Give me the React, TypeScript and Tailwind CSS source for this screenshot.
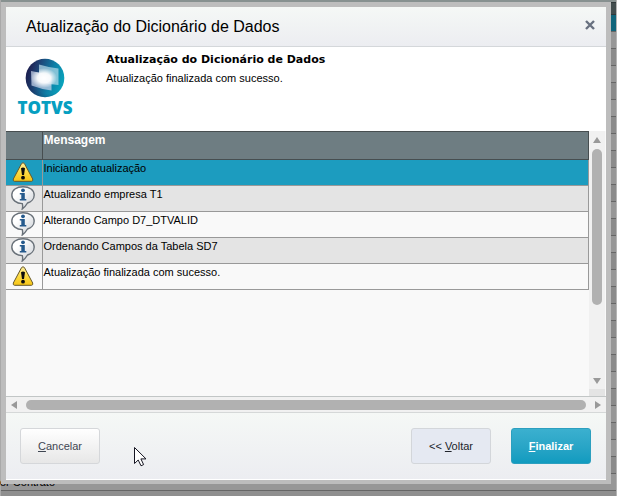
import { useState } from "react";

type MessageKind = "warning" | "info";

interface Message {
  kind: MessageKind;
  text: string;
}

const messages: Message[] = [
  { kind: "warning", text: "Iniciando atualização" },
  { kind: "info", text: "Atualizando empresa T1" },
  { kind: "info", text: "Alterando Campo D7_DTVALID" },
  { kind: "info", text: "Ordenando Campos da Tabela SD7" },
  { kind: "warning", text: "Atualização finalizada com sucesso." },
];

function TotvsLogo() {
  return (
    <div className="flex w-[54px] flex-col items-center">
      <svg width="40" height="40" viewBox="0 0 40 40" aria-hidden="true">
        <defs>
          <linearGradient id="globe" x1="0" y1="0.3" x2="1" y2="0.6">
            <stop offset="0" stopColor="#20184a" />
            <stop offset="0.3" stopColor="#1d4678" />
            <stop offset="0.65" stopColor="#0d7fa6" />
            <stop offset="1" stopColor="#0aa5bd" />
          </linearGradient>
          <radialGradient id="shade" cx="0.6" cy="0.45" r="0.65">
            <stop offset="0.7" stopColor="#12264f" stopOpacity="0" />
            <stop offset="1" stopColor="#12264f" stopOpacity="0.4" />
          </radialGradient>
          <radialGradient id="glow">
            <stop offset="0" stopColor="#fff" />
            <stop offset="0.5" stopColor="#fff" stopOpacity="0.9" />
            <stop offset="1" stopColor="#fff" stopOpacity="0" />
          </radialGradient>
          <clipPath id="panes">
            <path d="M14 6.500Q24 9.500 33.500 10.500V27Q23 26.500 14 23.500Z" />
            <path d="M6 13Q16 14.500 26.500 18V32.500Q17 31.500 6.500 27.500Z" />
          </clipPath>
        </defs>
        <circle cx="20" cy="20" r="19.3" fill="url(#globe)" />
        <circle cx="20" cy="20" r="19.3" fill="url(#shade)" />
        <path d="M14 6.500Q24 9.500 33.500 10.500V27Q23 26.500 14 23.500Z" fill="#b7dbea" fillOpacity="0.7" />
        <path d="M6 13Q16 14.500 26.500 18V32.500Q17 31.500 6.500 27.500Z" fill="#c3cfe6" fillOpacity="0.75" />
        <ellipse cx="19" cy="20" rx="13" ry="10" fill="url(#glow)" clipPath="url(#panes)" />
      </svg>
      <span className="font-['Open_Sans',sans-serif] text-[17px] leading-5 font-extrabold text-[#069fc1]">
        TOTVS
      </span>
    </div>
  );
}

function WarningIcon() {
  return (
    <svg width="22" height="20" viewBox="0 0 22 20" aria-label="Aviso">
      <defs>
        <linearGradient id="yellow" x1="0" y1="0" x2="0" y2="1">
          <stop offset="0" stopColor="#fff0a0" />
          <stop offset="0.5" stopColor="#fddb45" />
          <stop offset="1" stopColor="#f6c515" />
        </linearGradient>
      </defs>
      <path
        d="M9.600 1.500Q11 0 12.400 1.500L20.700 17Q21.200 19.200 19.500 19.300H2.500Q0.800 19.200 1.300 17Z"
        fill="url(#yellow)"
        stroke="#66582a"
      />
      <path d="M9 6.300Q11 4.500 13 6.300L12 13H10Z" fill="#0c0c0c" />
      <circle cx="11" cy="15.700" r="1.900" fill="#0c0c0c" />
    </svg>
  );
}

function InfoIcon() {
  return (
    <svg width="24" height="24" viewBox="0 0 24 24" aria-label="Informação">
      <defs>
        <linearGradient id="bubble" x1="0" y1="0" x2="1" y2="1">
          <stop offset="0.3" stopColor="#fff" />
          <stop offset="1" stopColor="#c9ced4" />
        </linearGradient>
      </defs>
      <path
        d="M12 0.700C18.500 0.700 23.200 4 23.200 9C23.200 13 20 16 16.500 17C15 19.500 13.300 21.500 11.300 23C11.800 21 11.800 19.500 11.300 17.600C5.500 17.400 0.800 14 0.800 9C0.800 4 5.500 0.700 12 0.700Z"
        fill="url(#bubble)"
        stroke="#687078"
        strokeWidth="1.400"
      />
      <circle cx="12" cy="4.300" r="1.900" fill="#24598c" />
      <path d="M8.800 7H13.800V13H15.300V14.500H8.800V13H10.300V8.500H8.800Z" fill="#24598c" />
    </svg>
  );
}

function Arrow({ points }: { points: string }) {
  return (
    <svg width="8" height="8" viewBox="0 0 8 8" aria-hidden="true">
      <polygon points={points} fill="#999" />
    </svg>
  );
}

function Backdrop() {
  return (
    <div className="absolute inset-0 flex flex-col overflow-hidden bg-[#8f8f8f]" aria-hidden="true">
      <div className="h-[2px] shrink-0 bg-[#879190]" />
      <div className="h-[13px] shrink-0 border-y border-[#30383a] bg-[#424d4e]" />
      <div className="h-[17px] shrink-0 border-b border-[#666] bg-[#10657b]" />
      {Array.from({ length: 27 }, (_, i) => (
        <div key={i} className="h-[17px] shrink-0 border-b border-[#666] bg-[#8b8b8b] even:bg-[#979797]" />
      ))}
      <div className="absolute inset-y-0 right-0 w-px bg-[#b5b5b5]" />
      <div className="absolute inset-y-0 left-0 w-px bg-[#a9a9a9]" />
      <span className="absolute bottom-[7px] left-0 text-[11px] leading-[13px] text-black">or Contrato</span>
    </div>
  );
}

function MessageTable() {
  const [selected, setSelected] = useState<number>(0);

  return (
    <table className="w-full table-fixed border-collapse text-left text-[11px] leading-[13px]">
      <colgroup>
        <col className="w-9" />
        <col />
      </colgroup>
      <thead>
        <tr className="h-7 bg-[#6e7d82] text-white">
          <th className="border border-l-0 border-[#474e50]" />
          <th className="border border-[#474e50] px-px pt-[2px] align-top text-[12px] font-bold">Mensagem</th>
        </tr>
      </thead>
      <tbody>
        {messages.map((message, i) => (
          <tr
            key={message.text}
            onClick={() => setSelected(i)}
            className={`h-[26px] cursor-default ${
              i === selected ? "bg-[#1c9cbf]" : i % 2 ? "bg-[#e4e4e4]" : "bg-[#f9f9f9]"
            }`}
          >
            <td className="border-r border-b border-[#999] p-0">
              <div className="flex h-[25px] items-start justify-center pr-px">
                {message.kind === "warning" ? (
                  <div className="pt-[2px]">
                    <WarningIcon />
                  </div>
                ) : (
                  <InfoIcon />
                )}
              </div>
            </td>
            <td className="border-r border-b border-[#999] px-px pt-[2px] align-top">{message.text}</td>
          </tr>
        ))}
      </tbody>
    </table>
  );
}

function MousePointer() {
  return (
    <svg className="absolute top-[34px] left-[128px]" width="13" height="20" viewBox="0 0 13 20" aria-hidden="true">
      <path
        d="M0.500 0.500V16.500L4.200 13L7 18.800L9.600 17.600L6.900 11.900H12Z"
        fill="#fff"
        stroke="#161622"
      />
    </svg>
  );
}

function App() {
  return (
    <div className="relative flex min-h-screen flex-col pt-[2px] pr-[6px] pb-[12px] pl-px font-['Liberation_Sans',Arial,sans-serif] text-black">
      <Backdrop />
      <div
        role="dialog"
        aria-labelledby="dialog-title"
        className="relative flex flex-1 flex-col border-[5px] border-b-4 border-[#bdbdbd] bg-white"
      >
        <header className="flex h-10 items-center justify-between border-b border-[#d4d7da] bg-linear-to-b from-[#f5f8f6] to-[#ecedf1] pr-[10px] pl-5">
          <h1 id="dialog-title" className="text-[16px] leading-5">
            Atualização do Dicionário de Dados
          </h1>
          <button type="button" aria-label="Fechar" className="pb-1">
            <svg width="12" height="12" viewBox="0 0 12 12">
              <path d="M2 2L10 10M10 2L2 10" stroke="#68707f" strokeWidth="2.400" />
            </svg>
          </button>
        </header>

        <section className="flex h-[84px] gap-[34px] pl-3">
          <div className="pt-[11px]">
            <TotvsLogo />
          </div>
          <div className="pt-[6px]">
            <h2 className="font-['DejaVu_Sans',Verdana,sans-serif] text-[11px] leading-[14px] font-bold">
              Atualização do Dicionário de Dados
            </h2>
            <p className="pt-1 text-[11px] leading-[14px]">Atualização finalizada com sucesso.</p>
          </div>
        </section>

        <main className="flex flex-1 border-b border-[#c2c6c6] bg-[#f9f9f9]">
          <div className="min-w-0 flex-1">
            <MessageTable />
          </div>
          <div className="mr-px flex w-4 flex-col items-center bg-[#f1f1f1]">
            <div className="flex h-[18px] items-center">
              <Arrow points="4,1 8,7 0,7" />
            </div>
            <div className="h-[156px] w-[10px] rounded-full bg-[#b1b1b1]" />
            <div className="mt-auto flex h-4 items-center">
              <Arrow points="0,1 8,1 4,7" />
            </div>
            <div className="h-[7px] w-full bg-[#e4e4e4]" />
          </div>
        </main>

        <div className="flex h-4 items-center gap-2 border-b border-[#d5d8d8] bg-[#f1f1f1] px-1">
          <Arrow points="7,0 7,8 1,4" />
          <div className="h-[10px] flex-1 rounded-full bg-[#b1b1b1]" />
          <Arrow points="1,0 7,4 1,8" />
        </div>

        <footer className="relative flex h-[67px] items-center gap-5 border-b border-white bg-linear-to-b from-[#f5f8f6] to-[#ecedf1] pr-[15px] pl-[14px] text-[11px]">
          <button
            type="button"
            className="mr-auto h-9 w-20 rounded-[3px] border border-[#d5d7da] bg-linear-to-b from-white to-[#e7e7e7] text-[#3f4652]"
          >
            <u>C</u>ancelar
          </button>
          <button
            type="button"
            className="h-9 w-20 rounded-[3px] border border-[#d3d6da] bg-[#e5e9f2] text-[#20242b]"
          >
            &lt;&lt; <u>V</u>oltar
          </button>
          <button
            type="button"
            className="h-9 w-20 rounded-[3px] border border-[#2c9fbf] bg-linear-to-b from-[#3bb0cf] to-[#109bbf] font-bold text-white"
          >
            <u>F</u>inalizar
          </button>
          <MousePointer />
        </footer>
      </div>
    </div>
  );
}

export default App;
